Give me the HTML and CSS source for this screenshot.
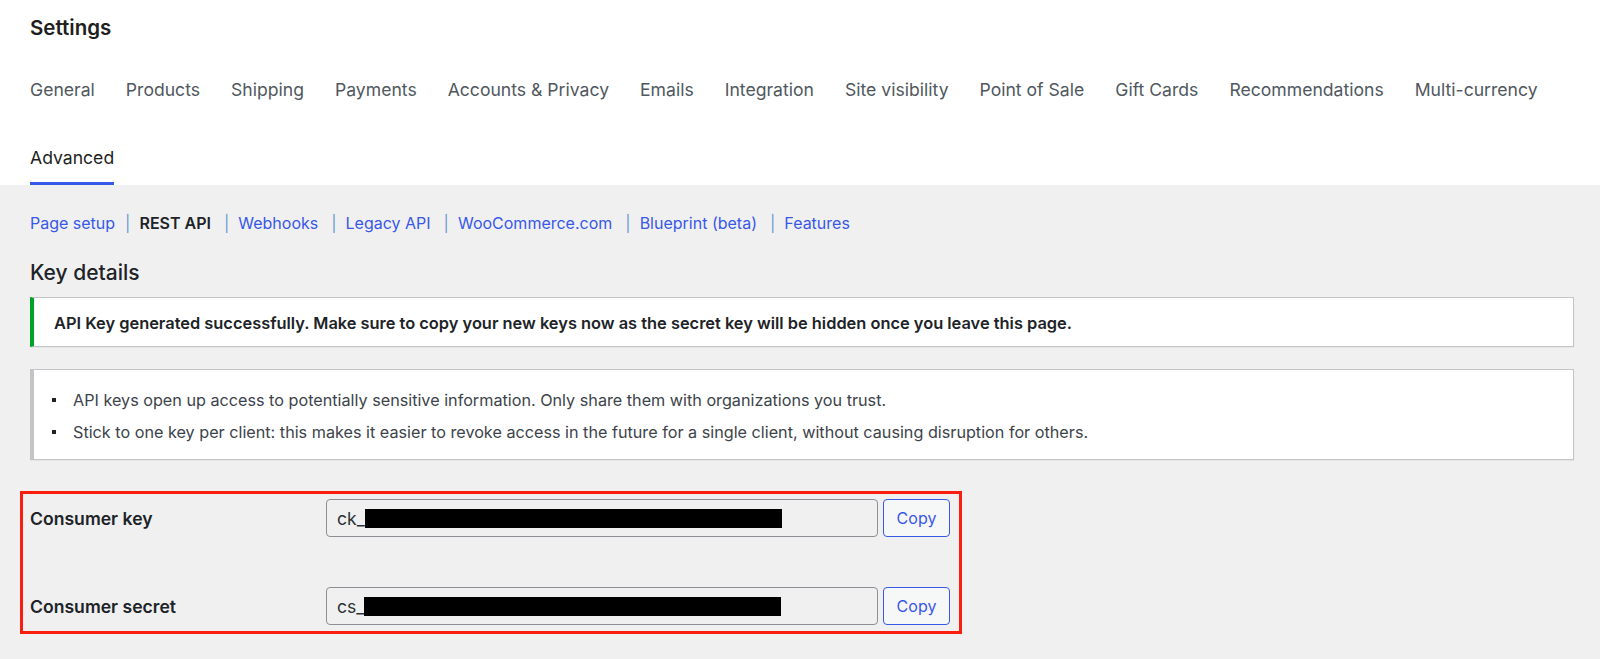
FILE: index.html
```html
<!DOCTYPE html>
<html lang="en">
<head>
    <meta charset="UTF-8">
    <title>Settings - REST API</title>
    <link rel="stylesheet" href="styles.css">
</head>
<body>
    <header class="settings-header">
        <h1 class="settings-title">Settings</h1>
        <nav class="settings-tabs">
            <a href="#" class="tab">General</a>
            <a href="#" class="tab">Products</a>
            <a href="#" class="tab">Shipping</a>
            <a href="#" class="tab">Payments</a>
            <a href="#" class="tab">Accounts &amp; Privacy</a>
            <a href="#" class="tab">Emails</a>
            <a href="#" class="tab">Integration</a>
            <a href="#" class="tab">Site visibility</a>
            <a href="#" class="tab">Point of Sale</a>
            <a href="#" class="tab">Gift Cards</a>
            <a href="#" class="tab">Recommendations</a>
            <a href="#" class="tab">Multi-currency</a>
            <a href="#" class="tab tab-active">Advanced</a>
        </nav>
    </header>

    <main class="settings-body">
        <ul class="subnav">
            <li><a href="#">Page setup</a></li>
            <li class="sep sep-first">|</li>
            <li class="current">REST API</li>
            <li class="sep">|</li>
            <li><a href="#">Webhooks</a></li>
            <li class="sep">|</li>
            <li><a href="#">Legacy API</a></li>
            <li class="sep">|</li>
            <li><a href="#">WooCommerce.com</a></li>
            <li class="sep">|</li>
            <li><a href="#">Blueprint (beta)</a></li>
            <li class="sep">|</li>
            <li><a href="#">Features</a></li>
        </ul>

        <h2 class="section-title">Key details</h2>

        <div class="notice notice-success">
            <p>API Key generated successfully. Make sure to copy your new keys now as the secret key will be hidden once you leave this page.</p>
        </div>

        <div class="notice notice-info">
            <ul>
                <li>API keys open up access to potentially sensitive information. Only share them with organizations you trust.</li>
                <li>Stick to one key per client: this makes it easier to revoke access in the future for a single client, without causing disruption for others.</li>
            </ul>
        </div>

        <div class="key-table">
            <div class="key-row">
                <label class="key-label">Consumer key</label>
                <div class="key-field"><span>ck_</span><span class="redact"></span></div>
                <button class="btn-copy">Copy</button>
            </div>
            <div class="key-row">
                <label class="key-label">Consumer secret</label>
                <div class="key-field"><span>cs_</span><span class="redact"></span></div>
                <button class="btn-copy">Copy</button>
            </div>
        </div>
    </main>
</body>
</html>
```

FILE: styles.css
```css
:root {
    --fondo: #f0f0f1;
    --texto: #1d2327;
    --gris: #50575e;
    --azul: #3858e9;
    --borde: #c3c4c7;
}

body {
    margin: 0;
    font-family: Inter, "Noto Sans", sans-serif;
    color: var(--texto);
    background-color: var(--fondo);
    min-height: 100vh;
}

.settings-header {
    background-color: #fff;
    padding: 0 30px;
}

.settings-title {
    margin: 0;
    padding: 16px 0 9px;
    font-size: 20.5px;
    line-height: 24px;
    font-weight: 600;
    color: #1e1e1e;
}

.settings-tabs {
    display: flex;
    flex-wrap: wrap;
    column-gap: 31px;
}

    .settings-tabs .tab {
        padding: 30px 0 13px;
        line-height: 22px;
        font-size: 17.6px;
        color: var(--gris);
        text-decoration: none;
        border-bottom: 3px solid transparent;
    }

    .settings-tabs .tab-active {
        color: #1e1e1e;
        border-bottom-color: var(--azul);
    }

.settings-body {
    padding: 0 26px 0 30px;
}

.subnav {
    list-style: none;
    margin: 28px 0 0;
    padding: 0;
    display: flex;
    font-size: 16px;
    line-height: 20px;
}

    .subnav a {
        color: var(--azul);
        text-decoration: none;
    }

    .subnav .sep {
        color: #6b9bd1;
        margin: 0 9px 0 13px;
    }

    .subnav .sep-first {
        margin-left: 10px;
    }

    .subnav .current {
        font-weight: 600;
        color: var(--texto);
    }

.section-title {
    margin: 27px 0 0;
    font-size: 21px;
    line-height: 26px;
    font-weight: 500;
}

.notice {
    background-color: #fff;
    border: 1px solid var(--borde);
    border-left-width: 4px;
    box-shadow: 0 1px 1px rgba(0, 0, 0, 0.04);
}

.notice-success {
    margin-top: 11px;
    border-left-color: #00a32a;
    padding: 14px 20px 12px;
}

    .notice-success p {
        margin: 0;
        font-size: 16.4px;
        line-height: 22px;
        font-weight: 600;
    }

.notice-info {
    margin-top: 22px;
    padding: 14px 12px 11px 18px;
}

    .notice-info ul {
        list-style: none;
        margin: 0;
        padding: 0;
    }

    .notice-info li {
        position: relative;
        padding-left: 21px;
        font-size: 16.2px;
        line-height: 32px;
        color: #3c434a;
    }

        .notice-info li::before {
            content: "";
            position: absolute;
            left: 0;
            top: 14px;
            width: 4px;
            height: 4px;
            background-color: var(--texto);
        }

.key-table {
    display: inline-flex;
    flex-direction: column;
    gap: 50px;
    margin: 31px 0 0 -10px;
    padding: 5px 9px 6px 7px;
    border: 3px solid #fa1e0e;
}

.key-row {
    display: flex;
    align-items: center;
}

.key-label {
    width: 296px;
    font-size: 17.6px;
    font-weight: 600;
}

.key-field {
    box-sizing: border-box;
    width: 552px;
    height: 38px;
    display: flex;
    align-items: center;
    padding: 0 10px;
    border: 1px solid #8c8f94;
    border-radius: 4px;
    font-size: 17.6px;
    color: #2c3338;
}

.redact {
    width: 417px;
    height: 19px;
    background-color: #000;
}

.btn-copy {
    box-sizing: border-box;
    width: 67px;
    height: 38px;
    margin-left: 5px;
    background-color: #f6f7f7;
    border: 1px solid var(--azul);
    border-radius: 4px;
    color: var(--azul);
    font-family: inherit;
    font-size: 16px;
    cursor: pointer;
}
```
